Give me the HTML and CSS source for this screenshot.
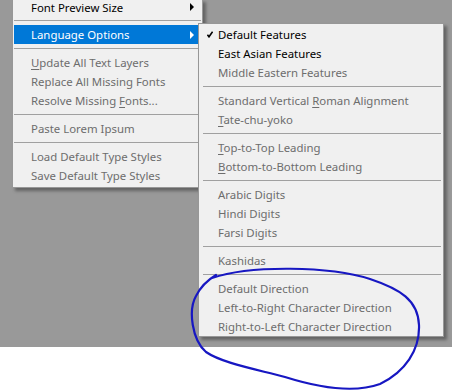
FILE: index.html
```html
<!DOCTYPE html>
<html lang="en">
<head>
    <meta charset="utf-8">
    <title>Language Options</title>
    <link rel="stylesheet" href="styles.css">
</head>
<body>
<div class="desk">
    <div class="menu main">
        <div class="item first"><span>Font Preview Size</span><span class="arrow"></span></div>
        <div class="sep"></div>
        <div class="item active"><span>Language Options</span><span class="arrow"></span>
            <div class="menu sub">
                <div class="item"><svg class="check" width="6" height="7" viewBox="0 0 6 7"><path d="M0.4 3.6 L2 5.8 L5.6 0.6" fill="none" stroke="#000" stroke-width="1.6"/></svg><span>Default Features</span></div>
                <div class="item"><span>East Asian Features</span></div>
                <div class="item off"><span>Middle Eastern Features</span></div>
                <div class="sep"></div>
                <div class="item off"><span>Standard Vertical <u>R</u>oman Alignment</span></div>
                <div class="item off"><span><u>T</u>ate-chu-yoko</span></div>
                <div class="sep"></div>
                <div class="item off"><span><u>T</u>op-to-Top Leading</span></div>
                <div class="item off"><span><u>B</u>ottom-to-Bottom Leading</span></div>
                <div class="sep"></div>
                <div class="item off"><span>Arabic Digits</span></div>
                <div class="item off"><span>Hindi Digits</span></div>
                <div class="item off"><span>Farsi Digits</span></div>
                <div class="sep"></div>
                <div class="item off"><span>Kashidas</span></div>
                <div class="sep"></div>
                <div class="item off"><span>Default Direction</span></div>
                <div class="item off"><span>Left-to-Right Character Direction</span></div>
                <div class="item off"><span>Right-to-Left Character Direction</span></div>
            </div>
        </div>
        <div class="sep"></div>
        <div class="item off"><span><u>U</u>pdate All Text Layers</span></div>
        <div class="item off"><span>Replace All Missing Fonts</span></div>
        <div class="item off"><span>Resolve Missing <u>F</u>onts...</span></div>
        <div class="sep"></div>
        <div class="item off"><span>Paste Lorem Ipsum</span></div>
        <div class="sep"></div>
        <div class="item off"><span>Load Default Type Styles</span></div>
        <div class="item off"><span>Save Default Type Styles</span></div>
    </div>
</div>
<svg class="ink" width="452" height="390" viewBox="0 0 452 390">
    <path d="M212 278 C250 265 330 266 370 279 C400 289 418 300 419 325 C420 350 405 372 380 384 C355 393 320 388 285 377 C255 369 222 363 206 352 C192 340 188 310 196 296 C200 288 206 281 216 275" fill="none" stroke="#1717c2" stroke-width="2.2" stroke-linecap="round"/>
</svg>
</body>
</html>
```

FILE: styles.css
```css
html{margin: 0; padding: 0;}
body{margin: 0; padding: 0; background: #fff; font-family: "Noto Sans", "Liberation Sans", sans-serif; font-size: 11.4px; color: #000; position: relative; height: 390px; overflow: hidden;}
.desk{display: flex; align-items: flex-start; height: 347px; padding-left: 12px; background: #999;}
.menu{box-sizing: border-box; background: #f0f0f0; border: 1px solid #979797; box-shadow: 3px 3px 3px rgba(0,0,0,0.35);}
.main{width: 191px; margin-top: -1px; padding: 0 1px 2px 1px;}
.sub{position: absolute; left: 184px; top: -2px; width: 246px; padding: 1px 2px 0 2px; color: #000;}
.item{display: flex; align-items: center; height: 19px; padding: 0 7px 0 17px; white-space: nowrap;}
.item.first{height: 14px; padding-bottom: 2px;}
.item.off{color: #6d6d6d;}
.item.active{position: relative; background: #0078d7; color: #fff;}
.arrow{margin-left: auto; width: 0; height: 0; border-left: 4px solid #000; border-top: 4px solid transparent; border-bottom: 4px solid transparent;}
.active > .arrow{border-left-color: #fff;}
.sep{margin: 4px 0; border-top: 1px solid #a0a0a0;}
.sub .sep{margin: 4px 0 4px 2px;}
.check{margin-left: -11px; margin-right: 5px; flex: none;}
u{text-decoration: underline; text-underline-offset: 2px;}
.ink{position: absolute; left: 0; top: 0; pointer-events: none;}
```
